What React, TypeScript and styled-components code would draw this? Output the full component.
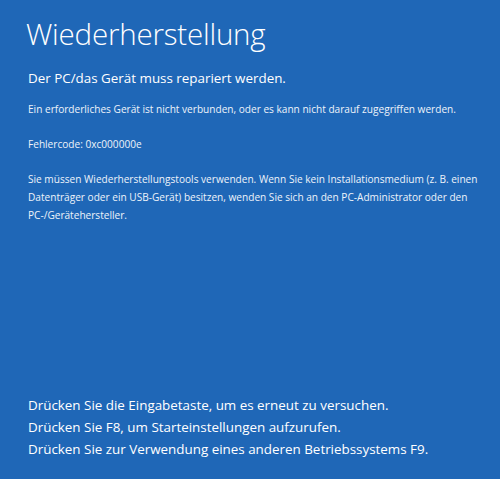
import React, { FC } from 'react'
import styled, { createGlobalStyle } from 'styled-components'

const GlobalStyle = createGlobalStyle`
  html, body {
    margin: 0;
    padding: 0;
    background: #1f67b7;
  }
  #root {
    height: 479px;
  }
`

const Screen = styled.div`
  box-sizing: border-box;
  height: 479px;
  width: 500px;
  background: #1f67b7;
  color: #ffffff;
  font-family: "Segoe UI", "Open Sans", "Noto Sans", sans-serif;
  display: flex;
  flex-direction: column;
  justify-content: space-between;
  padding: 14px 20px 19px 28px;
  overflow: hidden;
`

const Top = styled.div`
  display: flex;
  flex-direction: column;
`

const Title = styled.h1`
  margin: 0 0 0 -2px;
  font-size: 29.5px;
  font-weight: 300;
  line-height: 40px;
  letter-spacing: -0.2px;
`

const Subtitle = styled.p`
  margin: 14px 0 12px;
  font-size: 13.4px;
  font-weight: 400;
  line-height: 20px;
`

const Paragraph = styled.p`
  margin: 0 0 17px;
  font-size: 10.1px;
  line-height: 18px;
  color: #eef3fa;
`

const Footer = styled.div`
  display: flex;
  flex-direction: column;
`

const Hint = styled.p`
  margin: 0;
  font-size: 13.4px;
  line-height: 22px;
`

const hints = [
  'Drücken Sie die Eingabetaste, um es erneut zu versuchen.',
  'Drücken Sie F8, um Starteinstellungen aufzurufen.',
  'Drücken Sie zur Verwendung eines anderen Betriebssystems F9.',
]

const App: FC = () => {
  return (
    <>
      <GlobalStyle />
      <Screen>
        <Top>
          <Title>Wiederherstellung</Title>
          <Subtitle>Der PC/das Gerät muss repariert werden.</Subtitle>
          <Paragraph>
            Ein erforderliches Gerät ist nicht verbunden, oder es kann nicht darauf zugegriffen werden.
          </Paragraph>
          <Paragraph>Fehlercode: 0xc000000e</Paragraph>
          <Paragraph>
            Sie müssen Wiederherstellungstools verwenden. Wenn Sie kein Installationsmedium (z. B. einen
            Datenträger oder ein USB-Gerät) besitzen, wenden Sie sich an den PC-Administrator oder den
            PC-/Gerätehersteller.
          </Paragraph>
        </Top>
        <Footer>
          {hints.map((h) => (
            <Hint key={h}>{h}</Hint>
          ))}
        </Footer>
      </Screen>
    </>
  )
}

export default App
